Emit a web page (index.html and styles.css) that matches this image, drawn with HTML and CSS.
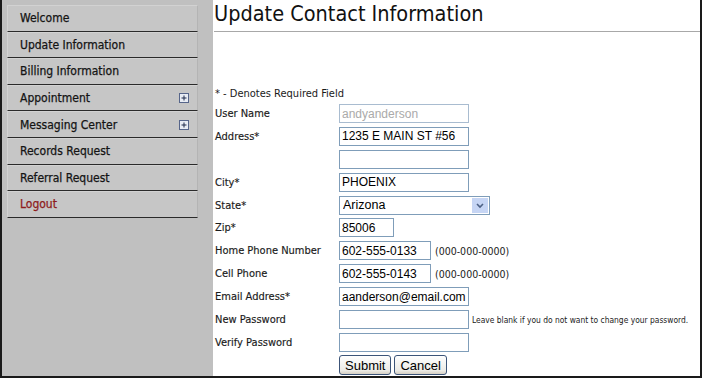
FILE: index.html
```html
<!DOCTYPE html>
<html lang="en">

<head>
  <title>Update Contact Information</title>
  <link rel="stylesheet" href="styles.css">
</head>

<body>
  <div class="frame">
    <div class="sidebar">
      <div class="menu-item">Welcome</div>
      <div class="menu-item">Update Information</div>
      <div class="menu-item">Billing Information</div>
      <div class="menu-item">Appointment
        <svg class="plus" width="10" height="10" viewBox="0 0 10 10">
          <rect x="0.5" y="0.5" width="9" height="9" fill="#e8ecf4" stroke="#56658a" />
          <path d="M2.5 5h5M5 2.5v5" stroke="#1e2a4a" stroke-width="1" />
        </svg>
      </div>
      <div class="menu-item">Messaging Center
        <svg class="plus" width="10" height="10" viewBox="0 0 10 10">
          <rect x="0.5" y="0.5" width="9" height="9" fill="#e8ecf4" stroke="#56658a" />
          <path d="M2.5 5h5M5 2.5v5" stroke="#1e2a4a" stroke-width="1" />
        </svg>
      </div>
      <div class="menu-item">Records Request</div>
      <div class="menu-item">Referral Request</div>
      <div class="menu-item logout">Logout</div>
    </div>

    <div class="main">
      <h1 class="title">Update Contact Information</h1>
      <p class="required-note">* - Denotes Required Field</p>
      <form class="contact-form">
        <label>User Name</label>
        <div class="field"><input class="text wide" type="text" value="andyanderson" disabled></div>

        <label>Address*</label>
        <div class="field"><input class="text wide" type="text" value="1235 E MAIN ST #56"></div>

        <label></label>
        <div class="field"><input class="text wide" type="text" value=""></div>

        <label>City*</label>
        <div class="field"><input class="text wide" type="text" value="PHOENIX"></div>

        <label>State*</label>
        <div class="field">
          <div class="select-wrap">
            <select class="state">
              <option>Arizona</option>
            </select>
            <svg class="select-arrow" width="16" height="15" viewBox="0 0 16 15">
              <rect x="0" y="0" width="16" height="15" fill="#c6d5f4" />
              <path d="M5 6l3 3 3-3" fill="none" stroke="#4d6185" stroke-width="1.6" />
            </svg>
          </div>
        </div>

        <label>Zip*</label>
        <div class="field"><input class="text zip" type="text" value="85006"></div>

        <label>Home Phone Number</label>
        <div class="field"><input class="text phone" type="text" value="602-555-0133"><span class="hint">(000-000-0000)</span></div>

        <label>Cell Phone</label>
        <div class="field"><input class="text phone" type="text" value="602-555-0143"><span class="hint">(000-000-0000)</span></div>

        <label>Email Address*</label>
        <div class="field"><input class="text wide" type="text" value="aanderson@email.com"></div>

        <label>New Password</label>
        <div class="field"><input class="text wide" type="password" value=""><span class="hint small">Leave blank if you do not want to change your password.</span></div>

        <label>Verify Password</label>
        <div class="field"><input class="text wide" type="password" value=""></div>

        <label></label>
        <div class="field buttons">
          <button type="button" class="btn">Submit</button>
          <button type="button" class="btn">Cancel</button>
        </div>
      </form>
    </div>
  </div>
</body>

</html>
```

FILE: styles.css
```css
html {
  overflow: hidden;
}

body {
  margin: 0;
  padding: 0;
  background: #ffffff;
}

.frame {
  display: flex;
  width: 702px;
  height: 378px;
  box-sizing: border-box;
  border-left: 2px solid #1a1a1a;
  border-right: 2px solid #1a1a1a;
  border-bottom: 2px solid #1a1a1a;
  overflow: hidden;
}

.sidebar {
  width: 211px;
  flex-shrink: 0;
  background: #c0c0c0;
  padding-top: 5px;
  box-sizing: border-box;
}

.menu-item {
  display: flex;
  align-items: center;
  justify-content: space-between;
  height: 26.6px;
  margin-left: 5px;
  width: 191px;
  box-sizing: border-box;
  padding: 0 8px 0 12px;
  background: #c6c6c6;
  border-top: 1px solid #d2d2d2;
  border-left: 1px solid #d2d2d2;
  border-right: 1px solid #b4b4b4;
  border-bottom: 1px solid #2a2a2a;
  font-family: "DejaVu Sans Condensed", "DejaVu Sans", sans-serif;
  font-size: 12px;
  color: #141414;
  -webkit-text-stroke: 0.25px #141414;
}

.menu-item.logout {
  color: #8e1b1b;
  -webkit-text-stroke: 0.25px #8e1b1b;
}

.plus {
  display: block;
}

.main {
  flex: 1;
  background: #ffffff;
  padding-left: 1px;
  font-family: "DejaVu Sans Condensed", "DejaVu Sans", sans-serif;
  color: #1a1a1a;
}

.title {
  margin: 0;
  height: 32px;
  box-sizing: border-box;
  padding: 1px 0 0 0;
  border-bottom: 1px solid #a8a8a8;
  font-size: 21.5px;
  font-weight: normal;
  color: #111111;
}

.required-note {
  margin: 55px 0 0 1px;
  font-size: 11px;
  line-height: 14px;
}

.contact-form {
  display: grid;
  grid-template-columns: 124px auto;
  row-gap: 3.9px;
  align-items: center;
  margin-top: 3px;
  padding-left: 1px;
  font-size: 11px;
}

.contact-form label {
  line-height: 19px;
  -webkit-text-stroke: 0.15px #1a1a1a;
}

.field {
  display: flex;
  align-items: center;
  height: 19px;
}

.text {
  height: 19px;
  box-sizing: border-box;
  margin: 0;
  padding: 0 2px;
  border: 1px solid #7f9db9;
  background: #ffffff;
  font-family: "Liberation Sans", Arial, sans-serif;
  font-size: 12px;
  color: #000000;
}

.text:disabled {
  color: #aaaaaa;
  border-color: #a9bcd0;
}

.wide {
  width: 130px;
}

.zip {
  width: 55px;
}

.phone {
  width: 92px;
}

.hint {
  margin-left: 4px;
  font-size: 10.5px;
  color: #1a1a1a;
}

.hint.small {
  margin-left: 3px;
  font-size: 8.4px;
}

.select-wrap {
  position: relative;
  width: 151px;
  height: 19px;
}

.state {
  width: 151px;
  height: 19px;
  box-sizing: border-box;
  margin: 0;
  padding: 0 3px;
  border: 1px solid #7f9db9;
  background: #ffffff;
  appearance: none;
  -webkit-appearance: none;
  font-family: "Liberation Sans", Arial, sans-serif;
  font-size: 12.5px;
  color: #000000;
  border-radius: 0;
}

.select-arrow {
  position: absolute;
  right: 2px;
  top: 2px;
}

.buttons {
  gap: 3px;
}

.btn {
  height: 20px;
  margin: 0;
  padding: 0 5px;
  border: 1px solid #3c5478;
  border-radius: 3px;
  background: linear-gradient(#ffffff, #ecebe6 80%, #d6d0c5);
  font-family: "Liberation Sans", Arial, sans-serif;
  font-size: 13px;
  color: #000000;
}
```
